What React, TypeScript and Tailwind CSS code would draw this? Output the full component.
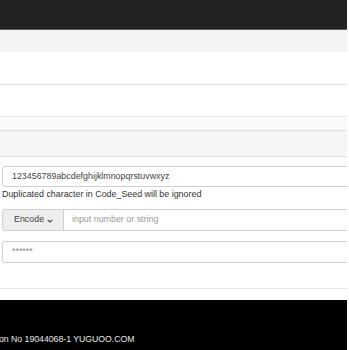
import React from "react";

export default function App() {
  return (
    <div className="w-[349px] h-[350px] bg-white overflow-hidden">
      <div className="w-[347px] h-[350px] overflow-hidden flex flex-col font-['Liberation_Sans',Arial,sans-serif] text-[#333]">
        <div className="h-[30px] shrink-0 bg-[#222] border-b border-[#5e5e5e]" />
        <div className="h-[22px] shrink-0 bg-[#f4f4f4]" />
        <div className="h-[33px] shrink-0 bg-white border-b border-[#dedede]" />
        <div className="h-[32px] shrink-0 bg-white border-b border-[#ececec]" />
        <div className="h-[13px] shrink-0 bg-[#fafafa]" />
        <div className="h-[27px] shrink-0 bg-[#f5f5f5] border-y border-[#e0e0e0]" />
        <div className="flex flex-col pl-[2px] pt-[9px] shrink-0">
          <div className="w-[360px] h-[21px] border border-[#cfcfcf] rounded-[3px] flex items-center pl-[9px] text-[8.9px] text-[#444]">
            123456789abcdefghijklmnopqrstuvwxyz
          </div>
          <div className="h-[12px] leading-[12px] text-[8.9px] text-[#333] mt-[1px]">
            Duplicated character in Code_Seed will be ignored
          </div>
          <div className="mt-[9px] w-[360px] h-[22px] flex">
            <div className="w-[62px] h-full bg-[#eeeeee] border border-[#cfcfcf] rounded-l-[3px] flex items-center pl-[11px] gap-[3px] text-[8.9px] text-[#444]">
              <span>Encode</span>
              <svg width="6" height="4" viewBox="0 0 6 4" className="mt-[1px]">
                <path d="M0.7 0.8 L3 3 L5.3 0.8" fill="none" stroke="#444" strokeWidth="1.1" />
              </svg>
            </div>
            <div className="flex-1 h-full border border-l-0 border-[#cfcfcf] flex items-center pl-[8px] text-[8.9px] text-[#9a9a9a]">
              input number or string
            </div>
          </div>
          <div className="mt-[10px] w-[360px] h-[22px] border border-[#cfcfcf] rounded-[3px] flex items-center pl-[9px] text-[8.9px] text-[#888]">
            ******
          </div>
        </div>
        <div className="h-[26px] shrink-0 border-b border-[#e6e6e6]" />
        <div className="h-[11px] shrink-0 bg-white" />
        <div className="flex-1 bg-black relative">
          <div className="absolute left-[-1px] top-[33px] text-[8.7px] leading-[12px] text-[#e8e8e8] whitespace-nowrap">
            on No 19044068-1 YUGUOO.COM
          </div>
        </div>
      </div>
    </div>
  );
}
